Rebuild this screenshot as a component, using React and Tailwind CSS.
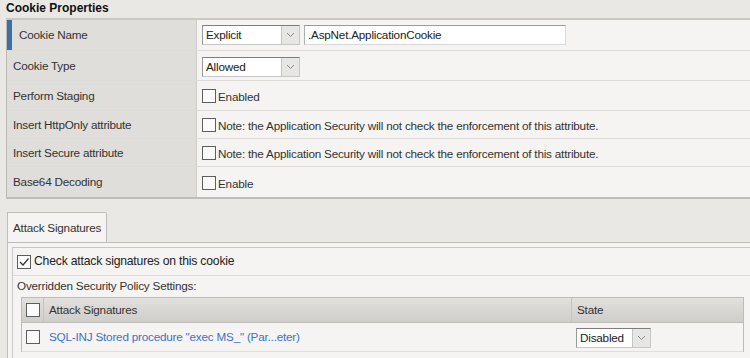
import React from 'react';

const font = { fontFamily: '"Liberation Sans", Arial, sans-serif' };

function Chevron() {
  return (
    <svg width="9" height="6" viewBox="0 0 9 6" className="block">
      <path d="M1 1 L4.5 4.5 L8 1" fill="none" stroke="#8a8a8a" strokeWidth="1" />
    </svg>
  );
}

function Select({ value, width }) {
  return (
    <div className={`flex h-[20px] ${width} bg-white border border-[#c6c6c6] border-t-[#7d7d7d] border-l-[#9a9a9a]`}>
      <div className="flex-1 pl-[3px] text-[11.7px] leading-[18px] text-[#222]">{value}</div>
      <div className="w-[18px] h-[18px] flex items-center justify-center bg-[#e6e6e4] border-l border-[#c4c4c4]">
        <Chevron />
      </div>
    </div>
  );
}

function Checkbox({ checked }) {
  return (
    <div className="w-[14px] h-[14px] shrink-0 bg-[#fbfbfb] border border-[#5e5e5e] flex items-center justify-center">
      {checked && (
        <svg width="12" height="12" viewBox="0 0 12 12">
          <path d="M2 6 L5 9 L10.5 2.5" fill="none" stroke="#333" strokeWidth="1.2" />
        </svg>
      )}
    </div>
  );
}

const NOTE = 'Note: the Application Security will not check the enforcement of this attribute.';

const rows = [
  { label: 'Cookie Name', h: 'h-[31px]', active: true },
  { label: 'Cookie Type', h: 'h-[30px]' },
  { label: 'Perform Staging', h: 'h-[30px]', check: 'Enabled' },
  { label: 'Insert HttpOnly attribute', h: 'h-[28px]', check: NOTE },
  { label: 'Insert Secure attribute', h: 'h-[28px]', check: NOTE },
  { label: 'Base64 Decoding', h: 'h-[30px]', check: 'Enable' },
];

function ValueCell({ row }) {
  if (row.label === 'Cookie Name') {
    return (
      <div className="flex items-center gap-[4px]">
        <Select value="Explicit" width="w-[98px]" />
        <div className="h-[20px] w-[262px] bg-white border border-[#dadada] border-t-[#9a9a9a] border-l-[#b0b0b0] pl-[3px] text-[11.7px] leading-[18px] text-[#222]">
          .AspNet.ApplicationCookie
        </div>
      </div>
    );
  }
  if (row.label === 'Cookie Type') {
    return (
      <div className="flex items-center pt-[2px]">
        <Select value="Allowed" width="w-[98px]" />
      </div>
    );
  }
  return (
    <div className="flex items-end gap-[2px] pt-[1px]">
      <Checkbox />
      <span className="text-[11.7px] leading-[13px] text-[#333]">{row.check}</span>
    </div>
  );
}

export default function App() {
  return (
    <div style={font} className="w-[750px] h-[358px] overflow-hidden bg-[#e9e8e4] text-[#333] tracking-[-0.2px]">
      <div className="h-[18px] pl-[6px] text-[12px] font-bold leading-[16px] text-[#111] tracking-normal">Cookie Properties</div>

      {/* properties table */}
      <div className="ml-[6px] border-t-2 border-[#c9c8c4] border-l border-l-[#b9b8b4] border-b-2 border-b-[#bdbcb8]">
        {rows.map((row, i) => (
          <div key={row.label} className={`flex ${row.h} ${i < rows.length - 1 ? 'border-b border-[#dcdbd7]' : ''}`}>
            <div className={`w-[190px] shrink-0 flex items-center bg-[#dfdedb] border-r border-[#cfcecb] text-[11.7px] text-[#333] ${row.active ? 'border-l-[5px] border-l-[#3b6fa6] pl-[7px]' : 'pl-[6px]'}`}>
              {row.label}
            </div>
            <div className="flex-1 flex items-center pl-[5px] bg-[#f5f4f2]">
              <ValueCell row={row} />
            </div>
          </div>
        ))}
      </div>

      {/* tabs */}
      <div className="mt-[13px] ml-[7px] flex">
        <div className="h-[30px] w-[100px] bg-[#f5f4f2] border border-b-0 border-[#bdbcb8] rounded-tr-[2px] pl-[5px] flex items-center whitespace-nowrap text-[11.7px] text-[#333]">
          Attack Signatures
        </div>
      </div>
      <div className="ml-[7px] border-t border-l border-[#bdbcb8] bg-[#f5f4f2] pt-[4px] pl-[4px] h-[200px]">
        <div className="border-t border-l border-[#c8c7c3] bg-[#f5f4f2] h-full">
          <div className="h-[28px] flex items-center gap-[3px] pl-[4px] border-b border-[#dcdbd7]">
            <Checkbox checked />
            <span className="text-[12.2px] text-[#222]">Check attack signatures on this cookie</span>
          </div>
          <div className="h-[21px] pl-[4px] flex items-end pb-[2px] text-[11.7px] text-[#333]">Overridden Security Policy Settings:</div>
          <div className="ml-[8px] w-[723px] border-t border-l border-r border-[#bdbcb8]">
            <div className="flex h-[25px] bg-gradient-to-b from-[#e1e0dc] to-[#cfceca] border-b border-[#bdbcb8] text-[11.7px] text-[#333]">
              <div className="w-[22px] flex items-center justify-center border-r border-[#c4c3bf]">
                <Checkbox />
              </div>
              <div className="flex-1 flex items-center pl-[5px] border-r border-[#c4c3bf]">Attack Signatures</div>
              <div className="w-[171px] flex items-center pl-[5px]">State</div>
            </div>
            <div className="flex h-[29px] bg-[#f5f4f2] border-b border-[#e0dfdb]">
              <div className="w-[22px] flex items-center justify-center">
                <Checkbox />
              </div>
              <div className="flex-1 flex items-center pl-[5px] text-[11.7px] text-[#3d72c6]">
                SQL-INJ Stored procedure "exec MS_" (Par...eter)
              </div>
              <div className="w-[171px] flex items-center pl-[4px] pt-[1px]">
                <Select value="Disabled" width="w-[75px]" />
              </div>
            </div>
          </div>
        </div>
      </div>
    </div>
  );
}
